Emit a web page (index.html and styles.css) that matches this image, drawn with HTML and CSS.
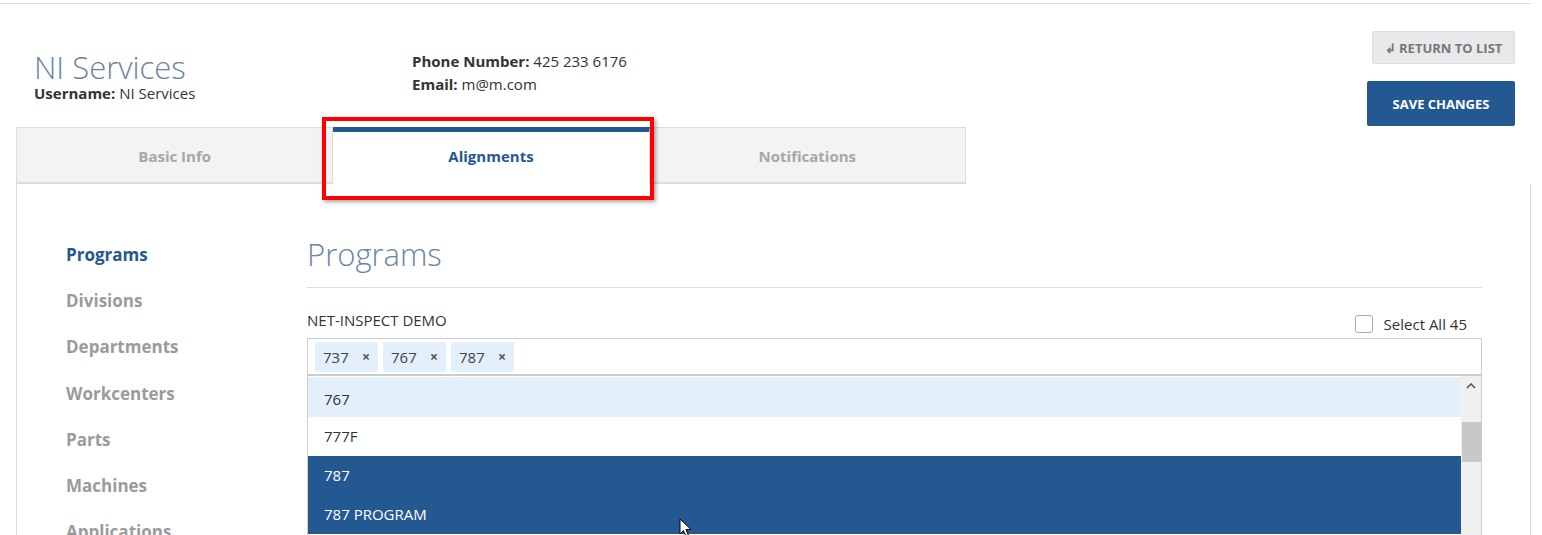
FILE: index.html
```html
<!DOCTYPE html>
<html lang="en">
<head>
    <meta charset="UTF-8">
    <title>NI Services</title>
    <link rel="stylesheet" href="styles.css">
</head>
<body>

<div class="page">
    <div class="header">
        <div class="title-block">
            <h1>NI Services</h1>
            <p><b>Username:</b> NI Services</p>
        </div>
        <div class="contact">
            <p><b>Phone Number:</b> 425 233 6176</p>
            <p><b>Email:</b> m@m.com</p>
        </div>
        <div class="actions">
            <button class="btn-return">&#8626; Return to list</button>
            <button class="btn-save">Save changes</button>
        </div>
    </div>

    <div class="tabs">
        <div class="tab">Basic Info</div>
        <div class="tab active">Alignments</div>
        <div class="tab">Notifications</div>
        <div class="highlight"></div>
    </div>

    <div class="panel">
        <ul class="side-nav">
            <li class="current">Programs</li>
            <li>Divisions</li>
            <li>Departments</li>
            <li>Workcenters</li>
            <li>Parts</li>
            <li>Machines</li>
            <li>Applications</li>
        </ul>

        <div class="content">
            <h2>Programs</h2>
            <div class="field-head">
                <span class="field-label">NET-INSPECT DEMO</span>
                <label class="select-all"><span class="box"></span>Select All 45</label>
            </div>
            <div class="multi">
                <span class="tag">737 <i>&times;</i></span>
                <span class="tag">767 <i>&times;</i></span>
                <span class="tag">787 <i>&times;</i></span>
            </div>
            <div class="dropdown">
                <ul class="options">
                    <li class="hover">767</li>
                    <li>777F</li>
                    <li class="selected">787</li>
                    <li class="selected">787 PROGRAM</li>
                </ul>
                <div class="scrollbar">
                    <svg class="arrow" width="10" height="6" viewBox="0 0 10 6"><path d="M1 5 L5 1 L9 5" fill="none" stroke="#555" stroke-width="1.6"/></svg>
                    <div class="thumb"></div>
                </div>
            </div>
        </div>
    </div>
</div>

<svg class="cursor" width="14" height="20" viewBox="0 0 14 20"><path d="M1 1 L1 16 L4.5 12.5 L7 18.5 L9.5 17.5 L7 11.5 L12 11.5 Z" fill="#fff" stroke="#000" stroke-width="1"/></svg>

</body>
</html>
```

FILE: styles.css
```css
* {
    margin: 0;
    padding: 0;
    box-sizing: border-box;
}

body {
    font-family: "Open Sans", Arial, sans-serif;
    color: #333;
    background-color: #fff;
    width: 1542px;
    height: 535px;
    overflow: hidden;
    position: relative;
}

.page {
    border-top: 1px solid #ddd;
    margin-top: 3px;
    margin-right: 11px;
    padding: 0 0 0 16px;
}

/* Cabecalho */
.header {
    display: flex;
    align-items: flex-start;
    height: 123px;
}

.title-block {
    padding: 46px 0 0 18px;
    width: 396px;
}

h1 {
    font-weight: 300;
    font-size: 31px;
    line-height: 34px;
    color: #6a85a4;
}

.title-block p {
    font-size: 15px;
    line-height: 18px;
}

.contact {
    padding-top: 46px;
    font-size: 15px;
    line-height: 23px;
}

.actions {
    margin-left: auto;
    margin-right: 16px;
    padding-top: 27px;
    display: flex;
    flex-direction: column;
    align-items: flex-end;
    gap: 17px;
}

.btn-return {
    font-family: inherit;
    background-color: #e8e9ea;
    border: 1px solid #dcdcdc;
    border-radius: 2px;
    color: #777;
    font-weight: bold;
    font-size: 13px;
    text-transform: uppercase;
    height: 33px;
    width: 143px;
}

.btn-save {
    font-family: inherit;
    background-color: #245891;
    border: none;
    border-radius: 2px;
    color: #fff;
    font-weight: bold;
    font-size: 13px;
    text-transform: uppercase;
    height: 45px;
    width: 148px;
}

/* Abas */
.tabs {
    display: flex;
    width: 950px;
    position: relative;
}

.tab {
    flex: 1;
    height: 57px;
    background-color: #f3f3f3;
    border: 1px solid #ddd;
    border-bottom: 2px solid #ddd;
    color: #a7a7a7;
    font-weight: bold;
    font-size: 15px;
    display: flex;
    align-items: center;
    justify-content: center;
    padding-top: 2px;
}

.tab + .tab {
    border-left: none;
}

.tab.active {
    background-color: #fff;
    border-top: 5px solid #245891;
    border-bottom: none;
    color: #245891;
    padding-top: 0;
    padding-bottom: 4px;
}

.highlight {
    position: absolute;
    left: 306px;
    top: -10px;
    width: 332px;
    height: 83px;
    border: 4px solid #f00;
    box-shadow: 2px 2px 4px rgba(0, 0, 0, 0.35);
}

/* Painel */
.panel {
    border: 1px solid #ddd;
    border-top: none;
    display: flex;
    height: 400px;
}

.side-nav {
    list-style: none;
    width: 290px;
    padding: 59px 0 0 49px;
}

.side-nav li {
    font-size: 17px;
    font-weight: bold;
    color: #9b9b9b;
    height: 46.2px;
    line-height: 24px;
}

.side-nav li.current {
    color: #245891;
}

.content {
    width: 1175px;
    padding-top: 48px;
}

h2 {
    font-weight: 300;
    font-size: 31px;
    line-height: 44px;
    color: #6a85a4;
    padding-bottom: 11px;
    border-bottom: 1px solid #ddd;
}

.field-head {
    display: flex;
    justify-content: space-between;
    align-items: flex-end;
    padding-top: 21px;
    height: 50px;
}

.field-label {
    font-size: 15px;
    line-height: 20px;
    padding-bottom: 8px;
}

.select-all {
    display: flex;
    align-items: center;
    font-size: 15px;
    color: #333;
    padding-right: 15px;
    padding-bottom: 4px;
}

.select-all .box {
    width: 18px;
    height: 18px;
    border: 1px solid #aaa;
    border-radius: 3px;
    margin-right: 11px;
}

.multi {
    border: 1px solid #ccc;
    border-bottom: 2px solid #ccc;
    height: 38px;
    padding: 3px 7px;
    display: flex;
    gap: 5px;
}

.tag {
    background-color: #e3f0fb;
    border-radius: 2px;
    font-size: 15px;
    line-height: 30px;
    padding: 0 8px;
    color: #444;
    width: 63px;
    height: 30px;
    display: flex;
    justify-content: space-between;
}

.tag i {
    font-style: normal;
    font-weight: bold;
    font-size: 14px;
    color: #555;
}

.dropdown {
    display: flex;
    border-left: 1px solid #ccc;
    border-right: 1px solid #ccc;
    height: 200px;
}

.options {
    list-style: none;
    flex: 1;
    padding-top: 1px;
}

.options li {
    height: 39px;
    line-height: 39px;
    font-size: 15px;
    padding-left: 16px;
}

.options li.hover {
    background-color: #e3f0fb;
    height: 40px;
    line-height: 44px;
}

.options li.selected {
    background-color: #245891;
    color: #fff;
}

.scrollbar {
    width: 20px;
    background-color: #f0f0f0;
    display: flex;
    flex-direction: column;
    align-items: center;
}

.scrollbar .arrow {
    margin-top: 7px;
}

.scrollbar .thumb {
    width: 19px;
    height: 40px;
    background-color: #c8c8c8;
    margin-top: 33px;
}

.cursor {
    position: absolute;
    left: 679px;
    top: 518px;
}
```
